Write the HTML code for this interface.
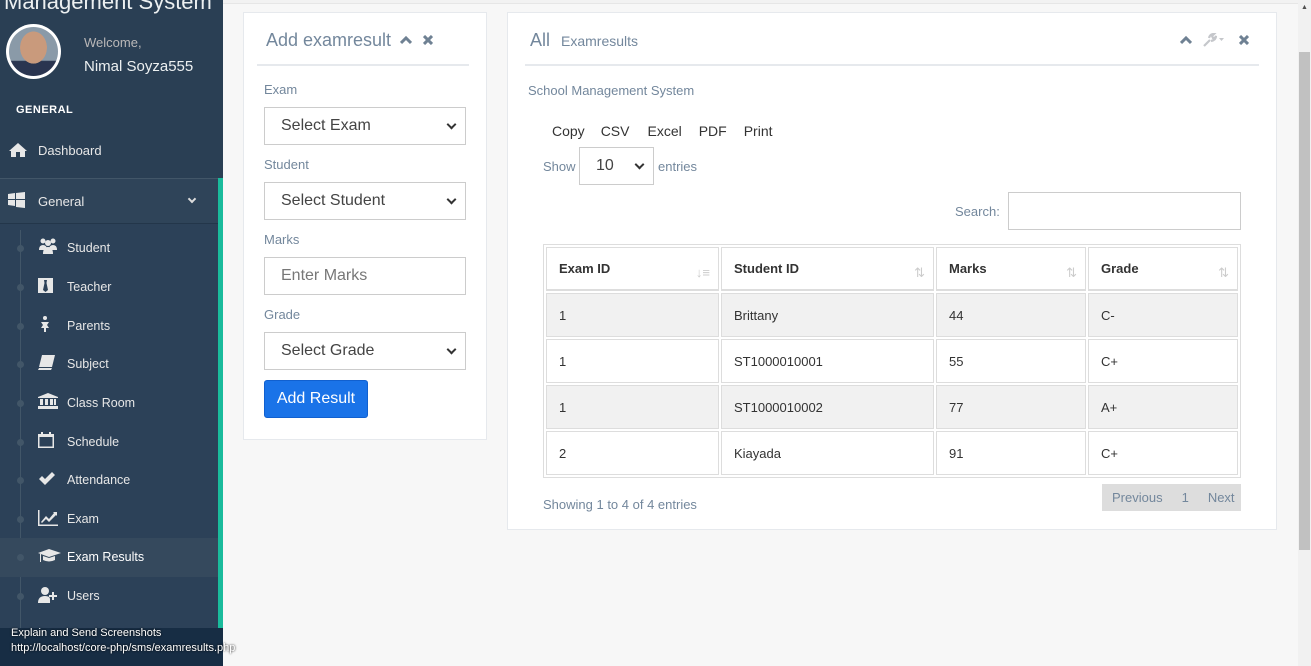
<!DOCTYPE html>
<html><head><meta charset="utf-8"><style>
*{box-sizing:border-box;margin:0;padding:0}
body{width:1311px;height:666px;overflow:hidden;background:#f7f7f7;font-family:"Liberation Sans",sans-serif;position:relative}
.sb{position:absolute;left:0;top:0;width:223px;height:666px;background:#2a3f54;color:#ecf0f1}
.title{position:absolute;left:4px;top:-11px;font-size:22px;color:#ecf0f1;white-space:nowrap}
.av{position:absolute;left:6px;top:24px;width:55px;height:55px;border-radius:50%;background:#fff;padding:3px}
.av div{width:100%;height:100%;border-radius:50%;background:radial-gradient(ellipse 30% 36% at 50% 42%,#c99a7c 0 90%,transparent 92%),linear-gradient(#8a9aa8 0 68%,#2a3550 70%);}
.wel{position:absolute;left:84px;top:35px;font-size:13px;color:#bab8b8}
.nm{position:absolute;left:84px;top:58px;font-size:15px;color:#ecf0f1}
.gen{position:absolute;left:16px;top:104px;font-size:11px;font-weight:bold;letter-spacing:.5px;color:#fff}
.it{position:absolute;left:0;width:218px;font-size:13px;color:#e7e7e7}
.green{position:absolute;left:218px;top:178px;width:5px;height:450px;background:#1abb9c}
.sub{position:absolute;left:0;top:178px;width:218px;height:450px;background:#2c4158}
.line{position:absolute;left:20px;top:230px;width:1px;height:400px;background:#425668}
.dot{position:absolute;left:17px;width:7px;height:7px;border-radius:50%;background:#425668}
.si{position:absolute;left:67px;font-size:12.5px;color:#e7e7e7}
.ic{position:absolute;left:38px;width:20px;height:16px;fill:#e7e7e7}
.foot{position:absolute;left:0;top:628px;width:223px;height:38px;background:#172d44}
.ov{position:absolute;left:11px;top:626px;font-size:11px;color:#fff;line-height:15px;text-shadow:0 0 2px #000;white-space:nowrap}
.panel{position:absolute;background:#fff;border:1px solid #e6e9ed}
h2{font-weight:normal;color:#73879c}
label{position:absolute;left:20px;font-size:13px;color:#73879c}
.sel{position:absolute;left:20px;width:202px;height:38px;border:1px solid #ccc;font-size:16px;color:#444;padding:9px 16px;background:#fff}
.arr:after{content:"";position:absolute;right:10px;top:13px;width:5px;height:5px;border-right:2px solid #333;border-bottom:2px solid #333;transform:rotate(45deg)}
table{position:absolute;left:35px;top:231px;width:698px;border-spacing:2px;border:1px solid #ddd;font-size:13px;color:#333;table-layout:fixed}
td,th{text-align:left;padding:0 12px;border:1px solid #ddd;height:44px}
th{height:44px;border-bottom:2px solid #ddd;position:relative}
th span{position:absolute;right:8px;top:17px;color:#ccc;font-size:13px;font-weight:normal}
tr.g td{background:#f1f1f1}
</style></head><body>
<div class="sb">
<div class="title">Management System</div>
<div class="av"><div></div></div>
<div class="wel">Welcome,</div><div class="nm">Nimal Soyza555</div>
<div class="gen">GENERAL</div>
<svg class="ic" style="left:8px;top:142px" viewBox="0 0 20 16"><path d="M10 1 L1 9 L3 9 L3 15 L8 15 L8 10 L12 10 L12 15 L17 15 L17 9 L19 9 Z"/></svg>
<div class="it" style="left:38px;top:143px">Dashboard</div>
<div class="sub"></div>
<div style="position:absolute;left:0;top:178px;width:218px;height:46px;background:#2f4459;border-top:1px solid #425668;border-bottom:1px solid #23364a"></div>
<svg class="ic" style="left:8px;top:192px" viewBox="0 0 20 16"><path d="M0 2 L7 1 L7 7 L0 7Z M8 1 L17 0 L17 7 L8 7Z M0 8 L7 8 L7 14 L0 13Z M8 8 L17 8 L17 16 L8 15Z"/></svg>
<div class="it" style="left:38px;top:194px">General</div>
<div style="position:absolute;left:189px;top:196px;width:6px;height:6px;border-right:2px solid #ddd;border-bottom:2px solid #ddd;transform:rotate(45deg)"></div>
<div class="green"></div>
<div class="line"></div>
<div style="position:absolute;left:0;top:538px;width:218px;height:39px;background:#35495d"></div>
<div class="dot" style="top:245px"></div><div class="dot" style="top:284px"></div><div class="dot" style="top:323px"></div><div class="dot" style="top:361px"></div><div class="dot" style="top:400px"></div><div class="dot" style="top:439px"></div><div class="dot" style="top:477px"></div><div class="dot" style="top:516px"></div><div class="dot" style="top:554px"></div><div class="dot" style="top:593px"></div>
<svg class="ic" style="top:238px" viewBox="0 0 20 16"><circle cx="5" cy="3" r="2.5"/><circle cx="15" cy="3" r="2.5"/><circle cx="10" cy="5" r="3"/><path d="M1 12 Q1 7 5 7 Q9 7 9 12Z M11 12 Q11 7 15 7 Q19 7 19 12Z M5 16 Q5 9 10 9 Q15 9 15 16Z"/></svg>
<div class="si" style="top:241px">Student</div>
<svg class="ic" style="top:278px" viewBox="0 0 20 16"><path d="M0 0 H15 V15 H0Z" /><path d="M6 2 H9 L8.5 5 L10 12 L7.5 14 L5 12 L6.5 5Z" fill="#2c4158"/></svg>
<div class="si" style="top:280px">Teacher</div>
<svg class="ic" style="top:316px" viewBox="0 0 20 16"><circle cx="7" cy="2" r="2"/><path d="M3 6 H11 L9 9 L11 12 H8 V16 H6 V12 H3 L5 9Z"/></svg>
<div class="si" style="top:319px">Parents</div>
<svg class="ic" style="top:355px" viewBox="0 0 20 16"><path d="M4 0 H17 L14 12 H1Z M1 13 H14 L13 15 H0Z"/></svg>
<div class="si" style="top:357px">Subject</div>
<svg class="ic" style="top:393px" viewBox="0 0 20 16"><path d="M10 0 L20 4 V5 H0 V4Z M2 6 H5 V12 H2Z M7 6 H10 V12 H7Z M12 6 H15 V12 H12Z M16 6 H18 V12 H16Z M0 13 H20 V16 H0Z"/></svg>
<div class="si" style="top:396px">Class Room</div>
<svg class="ic" style="top:432px" viewBox="0 0 20 16"><path d="M0 2 H16 V16 H0Z M1.5 5 V14.5 H14.5 V5Z"/><rect x="3" y="0" width="2" height="4"/><rect x="11" y="0" width="2" height="4"/></svg>
<div class="si" style="top:435px">Schedule</div>
<svg class="ic" style="top:471px" viewBox="0 0 20 16"><path d="M1 8 L4 5 L7 8 L14 1 L17 4 L7 14Z"/></svg>
<div class="si" style="top:473px">Attendance</div>
<svg class="ic" style="top:510px" viewBox="0 0 20 16"><path d="M0 0 H1.5 V14.5 H20 V16 H0Z M3 12 L8 6 L11 9 L16 3 L15 2 H19 V6 L18 5 L11 12 L8 9 L4 13Z"/></svg>
<div class="si" style="top:512px">Exam</div>
<svg class="ic" style="top:548px;width:23px" viewBox="0 0 23 16"><path d="M11 1 L23 5 L11 9 L0 5Z M5 8 V12 Q11 15 17 12 V8 L11 10Z M2 6 V14 H3 V6Z"/></svg>
<div class="si" style="top:550px;color:#fff">Exam Results</div>
<svg class="ic" style="top:587px" viewBox="0 0 20 16"><circle cx="7" cy="4" r="4"/><path d="M0 16 Q0 9 7 9 Q12 9 12 12 V16Z M14 5 H16 V8 H19 V10 H16 V13 H14 V10 H11 V8 H14Z"/></svg>
<div class="si" style="top:589px">Users</div>
<div class="foot"></div>
</div>
<div class="ov">Explain and Send Screenshots<br>http://localhost/core-php/sms/examresults.php</div>
<div style="position:absolute;left:223px;top:0;width:1075px;height:4px;border-bottom:1px solid #e6e6e6;background:#f2f2f2"></div>

<div class="panel" style="left:243px;top:12px;width:244px;height:428px">
<h2 style="position:absolute;left:22px;top:17px;font-size:18px">Add examresult</h2>
<svg style="position:absolute;left:156px;top:22px" width="12" height="10" viewBox="0 0 12 10"><path d="M1 8 L6 3 L11 8" stroke="#6f8193" stroke-width="3" fill="none"/></svg>
<svg style="position:absolute;left:179px;top:22px" width="10" height="10" viewBox="0 0 10 10"><path d="M1 1 L9 9 M9 1 L1 9" stroke="#6f8193" stroke-width="3"/></svg>
<div style="position:absolute;left:13px;top:51px;width:212px;height:2px;background:#e6e9ed"></div>
<label style="top:69px">Exam</label><div class="sel arr" style="top:94px">Select Exam</div>
<label style="top:144px">Student</label><div class="sel arr" style="top:169px">Select Student</div>
<label style="top:219px">Marks</label><div class="sel" style="top:244px;color:#777">Enter Marks</div>
<label style="top:294px">Grade</label><div class="sel arr" style="top:319px">Select Grade</div>
<div style="position:absolute;left:20px;top:367px;width:104px;height:38px;background:#1a73e8;border:1px solid #1160cf;border-radius:3px;color:#fff;font-size:16px;text-align:center;line-height:36px">Add Result</div>
</div>

<div class="panel" style="left:507px;top:12px;width:770px;height:518px">
<h2 style="position:absolute;left:22px;top:17px;font-size:18px">All <span style="font-size:14px;margin-left:6px">Examresults</span></h2>
<svg style="position:absolute;left:672px;top:22px" width="12" height="10" viewBox="0 0 12 10"><path d="M1 8 L6 3 L11 8" stroke="#6f8193" stroke-width="3" fill="none"/></svg>
<svg style="position:absolute;left:695px;top:20px" width="24" height="14" viewBox="0 0 24 14"><path d="M1 13 L7 7 M6 5 Q7 1 11 1 L9 3 L10 5 L12 5 L13 3 Q13 7 8 8" stroke="#c5c7cb" stroke-width="2.2" fill="none"/><path d="M16 5 H21 L18.5 8Z" fill="#c5c7cb"/></svg>
<svg style="position:absolute;left:731px;top:22px" width="10" height="10" viewBox="0 0 10 10"><path d="M1 1 L9 9 M9 1 L1 9" stroke="#6f8193" stroke-width="3"/></svg>
<div style="position:absolute;left:17px;top:51px;width:734px;height:2px;background:#e6e9ed"></div>
<div style="position:absolute;left:20px;top:70px;font-size:13px;color:#73879c">School Management System</div>
<div style="position:absolute;left:44px;top:110px;font-size:14px;color:#333;white-space:nowrap"><span>Copy</span><span style="margin-left:16px">CSV</span><span style="margin-left:18px">Excel</span><span style="margin-left:17px">PDF</span><span style="margin-left:17px">Print</span></div>
<div style="position:absolute;left:35px;top:146px;font-size:13px;color:#73879c">Show</div>
<div class="sel arr" style="left:71px;top:134px;width:75px;height:38px;font-size:16px;padding:9px 16px">10</div>
<div style="position:absolute;left:150px;top:146px;font-size:13px;color:#73879c">entries</div>
<div style="position:absolute;left:447px;top:191px;font-size:13px;color:#73879c">Search:</div>
<div style="position:absolute;left:500px;top:179px;width:233px;height:38px;border:1px solid #ccc"></div>
<table>
<colgroup><col style="width:173px"><col style="width:213px"><col style="width:150px"><col></colgroup>
<tr><th>Exam ID<span>↓≡</span></th><th>Student ID<span>⇅</span></th><th>Marks<span>⇅</span></th><th>Grade<span>⇅</span></th></tr>
<tr class="g"><td>1</td><td>Brittany</td><td>44</td><td>C-</td></tr>
<tr><td>1</td><td>ST1000010001</td><td>55</td><td>C+</td></tr>
<tr class="g"><td>1</td><td>ST1000010002</td><td>77</td><td>A+</td></tr>
<tr><td>2</td><td>Kiayada</td><td>91</td><td>C+</td></tr>
</table>
<div style="position:absolute;left:35px;top:484px;font-size:13px;color:#73879c">Showing 1 to 4 of 4 entries</div>
<div style="position:absolute;left:594px;top:471px;width:139px;height:27px;background:#ddd;font-size:13px;color:#73879c;line-height:27px;padding-left:10px;white-space:nowrap">Previous<span style="margin-left:19px">1</span><span style="margin-left:19px">Next</span></div>
</div>

<div style="position:absolute;left:1298px;top:0;width:13px;height:666px;background:#f1f1f1"></div>
<div style="position:absolute;left:1299px;top:52px;width:11px;height:498px;background:#c1c1c1"></div>
<div style="position:absolute;left:1301px;top:4px;font-size:7px;color:#505050">▲</div>
</body></html>
